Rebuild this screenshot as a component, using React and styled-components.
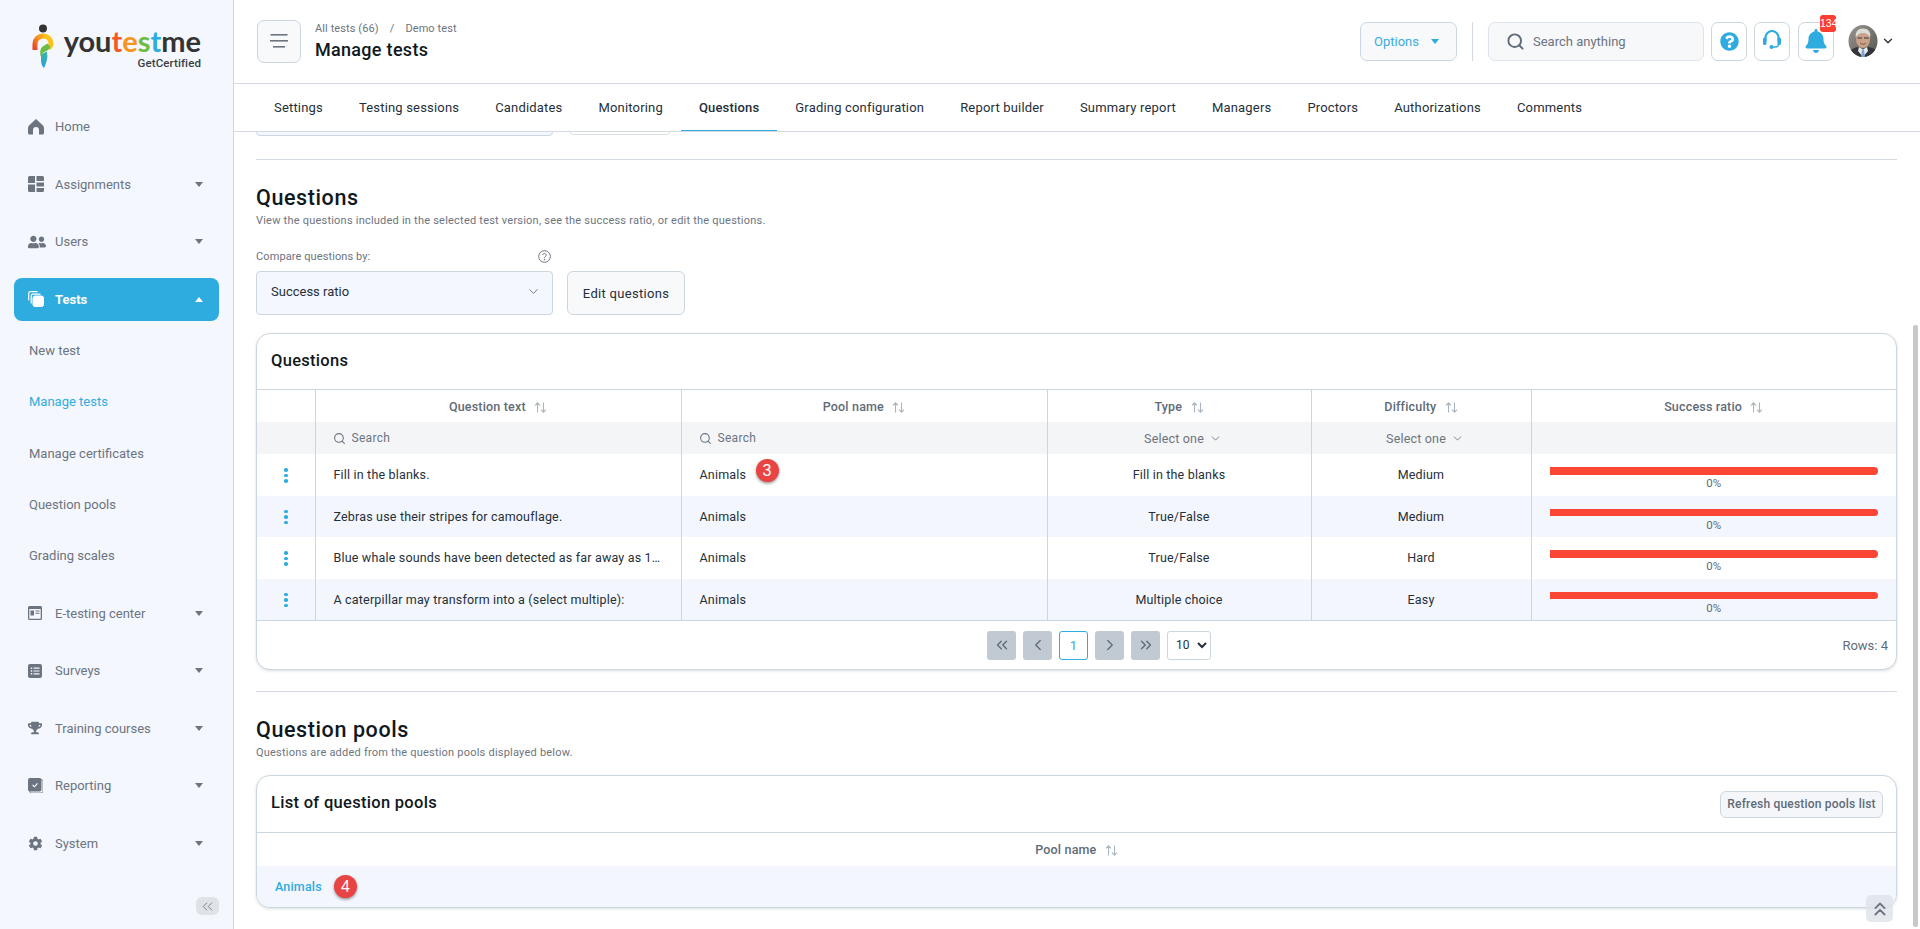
import React from "react";
import styled, { createGlobalStyle } from "styled-components";
import { FaBell, FaQuestionCircle, FaTrophy, FaUserFriends } from "react-icons/fa";
import { IoSettingsSharp } from "react-icons/io5";
import {
  LuChevronDown, LuChevronLeft, LuChevronRight, LuChevronsLeft, LuChevronsRight, LuChevronsUp, LuSearch,
} from "react-icons/lu";

const Global = createGlobalStyle`
  html, body { margin: 0; padding: 0; height: 100%; overflow: hidden; background: #fff; }
  body { font-family: Roboto, "Liberation Sans", sans-serif; letter-spacing: .3px; color: #1f2933; }
  * { box-sizing: border-box; }
`;

const Shell = styled.div`display: flex; width: 1920px; height: 929px; position: relative; overflow: hidden;`;

/* ---------- sidebar ---------- */
const Sidebar = styled.aside`
  width: 234px; flex: none; height: 100%; background: #f4f7fe; border-right: 1px solid #ced6de;
  padding: 0 14px; display: flex; flex-direction: column; position: relative;
`;
const LogoBox = styled.div`height: 105px; display: flex; padding: 24px 0 0 18px; gap: 9px; flex: none;`;
const LogoWords = styled.div`display: flex; flex-direction: column; align-items: flex-end; width: 138px; margin-top: 4px;`;
const LogoName = styled.div`
  font-family: Lato, sans-serif; font-weight: 700; font-size: 29px; line-height: 26px; letter-spacing: 0; color: #333; white-space: nowrap;
`;
const LogoPart = styled.span`color: ${p => p.$c};`;
const LogoSub = styled.div`font-size: 11.5px; font-weight: 500; line-height: 13px; letter-spacing: .1px; color: #3a3f44; margin-top: 3px;`;

const NavItem = styled.div`
  height: 43px; flex: none; margin-bottom: ${p => (p.$open ? 0 : "14.5px")};
  display: flex; align-items: center; padding: 0 16px 0 14px; border-radius: 8px;
  background: ${p => (p.$active ? "#2eace0" : "transparent")};
  color: ${p => (p.$active ? "#fff" : "#6c7480")};
  font-size: 13px; letter-spacing: 0; font-weight: ${p => (p.$active ? 700 : 400)};
`;
const NavIcon = styled.span`width: 27px; flex: none; display: flex; align-items: center; font-size: 17px;`;
const NavLabel = styled.span`flex: 1;`;
const Caret = styled.span`
  width: 0; height: 0; border-left: 4.5px solid transparent; border-right: 4.5px solid transparent;
  ${p => (p.$up ? `border-bottom: 5px solid ${p.$c};` : `border-top: 5px solid ${p.$c};`)}
`;
const SubMenu = styled.div`padding: 4.5px 0 10.5px; flex: none;`;
const SubItem = styled.div`
  height: 51.3px; display: flex; align-items: center; padding-left: 15px; font-size: 13px; letter-spacing: 0;
  color: ${p => (p.$active ? "#2eace0" : "#6c7480")};
`;
const Collapse = styled.button`
  position: absolute; right: 14px; top: 897px; width: 23px; height: 18px; border: 0; border-radius: 6px;
  background: #dfe3e8; color: #6c7480; display: flex; align-items: center; justify-content: center; padding: 0;
`;

/* ---------- top ---------- */
const Main = styled.main`flex: 1; min-width: 0; display: flex; flex-direction: column; height: 100%;`;
const Header = styled.header`
  height: 84px; flex: none; display: flex; align-items: center; padding: 0 25px 1px 23px; border-bottom: 1px solid #d3dae1; background: #fff;
`;
const MenuButton = styled.button`
  width: 44px; height: 43px; flex: none; border: 1px solid #ccd6e0; border-radius: 7px; background: #f8f9fb;
  display: flex; align-items: center; justify-content: center; padding: 0;
`;
const TitleBlock = styled.div`margin-left: 14px; display: flex; flex-direction: column;`;
const Crumbs = styled.div`font-size: 11px; letter-spacing: .1px; line-height: 14px; color: #6c7480; display: flex; gap: 11px;`;
const PageTitle = styled.h1`margin: 3px 0 0; font-size: 18px; line-height: 22px; font-weight: 500; color: #101820;`;
const RightTools = styled.div`margin-left: auto; display: flex; align-items: center; height: 40px;`;
const OptionsButton = styled.button`
  width: 97px; height: 39px; border: 1px solid #ccd6e0; border-radius: 7px; background: #f8f9fb; color: #3cace0;
  font: 400 13px Roboto, sans-serif; letter-spacing: 0; display: flex; align-items: center; justify-content: center; gap: 12px; padding: 0 4px 0 0;
`;
const VSep = styled.span`width: 1px; height: 39px; background: #d3dae1; margin: 0 15px;`;
const GlobalSearch = styled.div`
  width: 216px; height: 39px; border: 1px solid #dde3ea; border-radius: 7px; background: #f7f8fa; letter-spacing: 0;
  display: flex; align-items: center; padding-left: 17px; gap: 8px; color: #6c7480; font-size: 13px;
`;
const ToolButton = styled.button`
  width: 36px; height: 39px; margin-left: ${p => p.$gap || 7}px; border: 1px solid #ccd6e0; border-radius: 7px; background: #fff; color: #2eace0;
  display: flex; align-items: center; justify-content: center; padding: 0; position: relative;
`;
const CountBadge = styled.span`
  position: absolute; top: -8px; right: -3px; width: 16px; height: 17px; background: #fb3f31; border-radius: 3px;
  color: #fff; font-size: 10.5px; font-weight: 500; letter-spacing: 0; line-height: 17px; text-align: center;
`;
const AvatarWrap = styled.div`margin-left: 14px; display: flex; align-items: center; gap: 3px; color: #333;`;

const TabBar = styled.nav`height: 48px; flex: none; display: flex; padding-left: 22px; border-bottom: 1px solid #d3dae1; background: #fff; position: relative; z-index: 2;`;
const Tab = styled.div`
  padding: 0 18px; height: 47px; display: flex; align-items: center; font-size: 13px; letter-spacing: .18px; color: #252f3a; white-space: nowrap;
  font-weight: ${p => (p.$active ? 500 : 400)};
  border-bottom: ${p => (p.$active ? "1px solid #2eace0" : "0")};
  margin-bottom: -1px;
`;

/* ---------- content ---------- */
const Content = styled.div`flex: 1; overflow: hidden; padding: 0 23px 0 22px; background: #fff;`;
const ClippedRow = styled.div`display: flex; gap: 15px; margin-top: -40px; height: 44px;`;
const ClippedSelect = styled.div`width: 297px; height: 44px; background: #f4f7fe; border: 1px solid #ccd6e0; border-radius: 4px;`;
const ClippedButton = styled.div`width: 104px; height: 43px; background: #fff; border: 1px solid #d8dfe6; border-radius: 6px;`;
const Divider = styled.hr`margin: ${p => p.$top}px 0 0; border: 0; border-top: 1px solid #d3dae1;`;
const SectionTitle = styled.h2`margin: ${p => p.$top}px 0 0; font-size: 21.5px; line-height: 26px; font-weight: 500; color: #101820; letter-spacing: .6px;`;
const SectionText = styled.p`margin: 3px 0 0; font-size: 11px; line-height: 14px; color: #6c7480; letter-spacing: .22px;`;
const FieldLabelRow = styled.div`display: flex; justify-content: space-between; align-items: center; width: 297px; margin-top: 21px; height: 14px; padding-right: 2px; color: #6c7480; font-size: 11px; letter-spacing: .1px;`;
const ControlRow = styled.div`display: flex; gap: 14px; margin-top: 8px;`;
const SelectBox = styled.div`
  width: 297px; height: 44px; border: 1px solid #ccd6e0; border-radius: 4px; background: #f4f7fe; letter-spacing: 0;
  display: flex; align-items: center; justify-content: space-between; padding: 0 11px 3px 14px; font-size: 13px; color: #252f3a;
`;
const PlainButton = styled.button`
  width: 118px; height: 44px; border: 1px solid #ccd6e0; border-radius: 6px; background: #f8f9fb; color: #252f3a;
  font: 400 13px Roboto, sans-serif; letter-spacing: .3px; padding: 0;
`;
const Card = styled.section`
  margin-top: ${p => p.$top}px; border: 1px solid #ccd6e0; border-radius: 14px; background: #fff; overflow: hidden;
  box-shadow: 0 1px 3px rgba(40, 50, 60, .16);
`;
const CardHead = styled.div`
  height: ${p => p.$h}px; display: flex; align-items: center; justify-content: space-between; padding: 0 13px 2px 14px;
  border-bottom: 1px solid #ccd6e0;
`;
const CardTitle = styled.h3`margin: 0; font-size: 16.5px; line-height: 20px; font-weight: 500; color: #101820;`;
const SmallButton = styled.button`
  width: 163px; height: 27px; border: 1px solid #ccd6e0; border-radius: 6px; background: #f4f6f9; color: #5f6b78;
  font: 500 12px Roboto, sans-serif; letter-spacing: .2px; padding: 0; margin-top: 2px;
`;
const Table = styled.table`width: 100%; table-layout: fixed; border-collapse: collapse; font-size: 12.5px; letter-spacing: .18px;`;
const HeadCell = styled.th`
  height: ${p => p.$h || 32}px; padding: 0; font-weight: 500; color: #5f6b78; text-align: center;
  border-left: ${p => (p.$first ? "0" : "1px solid #ccd6e0")};
`;
const SortIcon = styled.svg`margin-left: 5px; vertical-align: -2px;`;
const FilterCell = styled.td`
  height: 32px; padding: 0 0 0 ${p => (p.$search ? 17 : 0)}px; background: #f4f5f7; color: #6c7480;
  text-align: ${p => (p.$search ? "left" : "center")};
  border-left: ${p => (p.$first ? "0" : "1px solid #ccd6e0")};
`;
const SearchField = styled.div`display: flex; align-items: center; gap: 6px;`;
const SearchInput = styled.input`
  border: 0; background: transparent; width: 120px; padding: 0; outline: 0; font: 400 12px Roboto, sans-serif; letter-spacing: .3px;
  color: #6c7480; &::placeholder { color: #6c7480; opacity: 1; }
`;
const DropFilter = styled.span`display: inline-flex; align-items: center; gap: 5px; margin-left: 8px;`;
const Row = styled.tr`background: ${p => (p.$alt ? "#f3f6fd" : "#fff")};`;
const Cell = styled.td`
  height: ${p => p.$h || 41.5}px; padding: 0 ${p => (p.$pad ? 18 : 0)}px; color: #252f3a; white-space: nowrap;
  text-align: ${p => (p.$pad ? "left" : "center")}; position: relative;
  border-left: ${p => (p.$first ? "0" : "1px solid #ccd6e0")};
`;
const Kebab = styled.span`display: inline-flex; flex-direction: column; gap: 2px; vertical-align: middle;`;
const Dot = styled.i`width: 3.6px; height: 3.6px; border-radius: 50%; background: #2eace0; display: block;`;
const RatioCell = styled.div`padding: 0 18px 0 18px; display: flex; flex-direction: column; align-items: stretch; margin-top: 8px;`;
const RatioBar = styled.div`height: 7.5px; background: #fb4535; border-radius: 0 4px 4px 0;`;
const RatioText = styled.div`font-size: 11.5px; line-height: 14px; color: #5f6b78; text-align: center; margin-top: 1.5px;`;
const Callout = styled.span`
  position: absolute; top: ${p => p.$top}px; left: ${p => p.$left}px; width: 23px; height: 23px; border-radius: 50%; background: #e94444; color: #fff;
  font: 400 16px/23px "Liberation Sans", Arial, sans-serif; letter-spacing: 0; text-align: center; box-shadow: 0 1.5px 3px rgba(0,0,0,.4);
`;
const Pager = styled.div`height: 49px; border-top: 1px solid #ccd6e0; display: flex; align-items: center; padding: 0 8px 0 730px; gap: 7px; position: relative;`;
const PageButton = styled.button`
  width: 29px; height: 29px; border-radius: 3px; padding: 0; display: flex; align-items: center; justify-content: center; font: 400 13px Roboto, sans-serif;
  background: ${p => (p.$current ? "#fff" : "#c1cad3")}; color: ${p => (p.$current ? "#2eace0" : "#5f6b78")};
  border: ${p => (p.$current ? "1px solid #2eace0" : "0")};
`;
const PageSize = styled.select`
  width: 44px; height: 29px; border: 1px solid #ccd6e0; border-radius: 3px; background: #fff; color: #252f3a; font: 400 12px Roboto, sans-serif; padding: 0 0 0 4px;
`;
const RowCount = styled.div`margin-left: auto; font-size: 13px; letter-spacing: 0; color: #5f6b78;`;
const PoolLink = styled.a`color: #2eace0; font-weight: 500; text-decoration: none;`;
const ScrollThumb = styled.div`position: absolute; right: 2px; top: 325px; width: 5px; height: 602px; border-radius: 2px; background: #c8c8c8;`;
const ScrollTop = styled.button`
  position: absolute; left: 1866px; top: 895px; width: 27px; height: 27px; border: 0; border-radius: 5px; background: #dfe3e8cc; color: #6c7480;
  display: flex; align-items: center; justify-content: center; padding: 0;
`;

/* ---------- drawings ---------- */
const LogoMark = () => (
  <svg width="22" height="44" viewBox="0 0 22 44" style={{ flex: "none" }}>
    <defs>
      <linearGradient id="lgA" x1="0" y1="1" x2="1" y2="0"><stop offset="0" stopColor="#e8432a" /><stop offset=".6" stopColor="#f7941d" /><stop offset="1" stopColor="#fbb017" /></linearGradient>
      <linearGradient id="lgB" x1="0" y1="0" x2="0" y2="1"><stop offset="0" stopColor="#3fb5a0" /><stop offset="1" stopColor="#2a9fe0" /></linearGradient>
    </defs>
    <circle cx="11" cy="4.500" r="4" fill="#333" />
    <path d="M3 26 V20 a8 8 0 0 1 8 -8 h1" fill="none" stroke="url(#lgA)" strokeWidth="5" />
    <path d="M11.500 12 a7.500 7.500 0 0 1 7.500 7 q0 3 -2.500 5" fill="none" stroke="#fbc31a" strokeWidth="5" />
    <path d="M17.500 23 q-1 2.500 -4 3.500 q-3 .8 -4.500 3.500 q-.5 -6.500 4 -8 l2 -1.500 z" fill="#6cbd45" stroke="#6cbd45" strokeWidth="1.500" />
    <path d="M9 30.500 q3 -2 6 -3 q1 5 -.5 10 q-1 3.500 -2.500 6.500 q-2.500 -2 -3 -7 z" fill="url(#lgB)" />
  </svg>
);
const HomeIcon = () => (
  <svg width="16" height="16" viewBox="0 0 16 16" fill="currentColor"><path d="M8 0 L15 6.500 Q16 7.500 16 9 V14 a1.500 1.500 0 0 1 -1.500 1.500 H11 V11 a3 3 0 0 0 -6 0 V15.500 H1.500 A1.500 1.500 0 0 1 0 14 V9 Q0 7.500 1 6.500 Z" /></svg>
);
const TilesIcon = () => (
  <svg width="16" height="16" viewBox="0 0 16 16" fill="currentColor"><path d="M1.500 0H7v7H0V1.500A1.500 1.500 0 0 1 1.500 0zM8.500 0h6A1.500 1.500 0 0 1 16 1.500V5H8.500zM0 8.500h7V16H1.500A1.500 1.500 0 0 1 0 14.500zM8.500 6.500H16v4H8.500zM8.500 12H16v2.500a1.500 1.500 0 0 1-1.500 1.500h-6z" /></svg>
);
const StackIcon = () => (
  <svg width="16" height="16" viewBox="0 0 16 16" fill="none" stroke="currentColor"><rect x="5" y="5" width="10.500" height="10.500" rx="2" fill="currentColor" /><path d="M3.200 12.500V4.700A1.500 1.500 0 0 1 4.700 3.200h7.800M.7 9.500V2.200A1.500 1.500 0 0 1 2.200 .7h7.300" strokeWidth="1.200" /></svg>
);
const PanelIcon = () => (
  <svg width="14" height="14" viewBox="0 0 14 14" fill="currentColor"><path fillRule="evenodd" d="M1.500 0h11A1.500 1.500 0 0 1 14 1.500v11a1.500 1.500 0 0 1-1.500 1.500h-11A1.500 1.500 0 0 1 0 12.500v-11A1.500 1.500 0 0 1 1.500 0zM1.300 3v9.700h11.400V3zM2.500 4.500h3.500v5H2.500zM7.500 4.500h4v1h-4zM7.500 6.800h4v1h-4z" /></svg>
);
const ListIcon = () => (
  <svg width="14" height="14" viewBox="0 0 14 14"><rect width="14" height="14" rx="2" fill="currentColor" /><path d="M2.800 3.500h1.400v1.400H2.800zM2.800 6.300h1.400v1.400H2.800zM2.800 9.100h1.400v1.400H2.800zM5.500 3.600h6v1.200h-6zM5.500 6.400h6v1.200h-6zM5.500 9.200h6v1.200h-6z" fill="#f4f7fe" /></svg>
);
const ReportIcon = () => (
  <svg width="15" height="15" viewBox="0 0 15 15"><rect x="1.500" y="1.500" width="13.500" height="13.500" rx="2" fill="none" stroke="currentColor" strokeWidth=".8" /><rect width="13.500" height="13.500" rx="2" fill="currentColor" /><path d="M4.500 6.800l2 2 3-3.500" fill="none" stroke="#fff" strokeWidth="1.100" /></svg>
);
const MenuLines = () => (
  <svg width="18" height="14" viewBox="0 0 18 14" fill="#6c7480"><rect y="0" x=".5" width="17" height="1.600" /><rect y="6" width="18" height="1.600" /><rect y="12" x="3" width="12" height="1.600" /></svg>
);
const HeadsetIcon = () => (
  <svg width="20" height="24" viewBox="0 0 20 24" fill="none" stroke="currentColor"><path d="M3.500 12V8.500a6.500 6.500 0 0 1 13 0V12" strokeWidth="2.200" /><path d="M16.500 12v3a3 3 0 0 1-3 3H11" strokeWidth="1.300" /><rect x="1" y="8.500" width="3.500" height="7.500" rx="1.600" fill="currentColor" stroke="none" /><rect x="15.500" y="8.500" width="3.500" height="7.500" rx="1.600" fill="currentColor" stroke="none" /><circle cx="9.500" cy="18" r="2" fill="currentColor" stroke="none" /></svg>
);
const Avatar = () => (
  <svg width="30" height="32" viewBox="0 0 30 32">
    <defs>
      <clipPath id="av"><ellipse cx="15" cy="16" rx="14.500" ry="16" /></clipPath>
      <linearGradient id="avBg" x1="0" y1="0" x2="1" y2="1"><stop offset="0" stopColor="#9a9790" /><stop offset="1" stopColor="#55544f" /></linearGradient>
    </defs>
    <g clipPath="url(#av)">
      <rect width="30" height="32" fill="url(#avBg)" />
      <path d="M0 32v-3q3-6 10-7l5 2 5-2q8 1 10 6v4z" fill="#34363b" />
      <path d="M11 22l4 2.500 4-2.500 1 4-5 6-5-6z" fill="#e6ecf2" />
      <path d="M14 24.500h2l1 7.500h-4z" fill="#7fa6cf" />
      <ellipse cx="15" cy="14.500" rx="7" ry="8.500" fill="#c9a088" />
      <path d="M7.800 13q-1.300-9.500 7.200-9.500t7.200 9.500q-2-5-7.200-5t-7.200 5z" fill="#dddcd6" />
      <path d="M9.500 13h4.500M16 13h4.500" stroke="#3b3230" strokeWidth="1.200" />
      <path d="M12 18.500q3 1.500 6 0" stroke="#7d4f41" strokeWidth=".8" fill="none" />
    </g>
  </svg>
);
const Sort = () => (
  <SortIcon width="13" height="11" viewBox="0 0 13 11" fill="none" stroke="#aab4bf" strokeWidth="1.100"><path d="M3.500 10.500V1M1 3.300L3.500 .8 6 3.300M9.500 .5V10M7 7.700l2.500 2.500L12 7.700" /></SortIcon>
);
const InfoIcon = () => (
  <svg width="13" height="13" viewBox="0 0 13 13" fill="none" stroke="#6c7480"><circle cx="6.500" cy="6.500" r="5.800" /><path d="M4.800 5a1.700 1.700 0 1 1 2.500 1.600c-.6.300-.8.600-.8 1.200" /><circle cx="6.500" cy="9.600" r=".4" fill="#6c7480" /></svg>
);

const MENU_TOP = [
  ["Home", <HomeIcon />, false],
  ["Assignments", <TilesIcon />, true],
  ["Users", <FaUserFriends size={18} />, true],
];
const SUBMENU = ["New test", "Manage tests", "Manage certificates", "Question pools", "Grading scales"];
const MENU_BOTTOM = [
  ["E-testing center", <PanelIcon />],
  ["Surveys", <ListIcon />],
  ["Training courses", <FaTrophy size={14} />],
  ["Reporting", <ReportIcon />],
  ["System", <IoSettingsSharp size={15} />],
];
const TABS = ["Settings", "Testing sessions", "Candidates", "Monitoring", "Questions", "Grading configuration", "Report builder", "Summary report", "Managers", "Proctors", "Authorizations", "Comments"];
const ROWS = [
  ["Fill in the blanks.", "Fill in the blanks", "Medium"],
  ["Zebras use their stripes for camouflage.", "True/False", "Medium"],
  ["Blue whale sounds have been detected as far away as 1…", "True/False", "Hard"],
  ["A caterpillar may transform into a (select multiple):", "Multiple choice", "Easy"],
];
const COLS = [58, 366, 366, 264, 220, 365];

export default function App() {
  return (
    <Shell>
      <Global />
      <Sidebar>
        <LogoBox>
          <LogoMark />
          <LogoWords>
            <LogoName>
              you<LogoPart $c="#f15a29">t</LogoPart><LogoPart $c="#f7941d">e</LogoPart><LogoPart $c="#6cbd45">s</LogoPart><LogoPart $c="#2eace0">t</LogoPart>me
            </LogoName>
            <LogoSub>GetCertified</LogoSub>
          </LogoWords>
        </LogoBox>
        {MENU_TOP.map(([label, icon, caret]) => (
          <NavItem key={label}>
            <NavIcon>{icon}</NavIcon>
            <NavLabel>{label}</NavLabel>
            {caret && <Caret $c="#6c7480" />}
          </NavItem>
        ))}
        <NavItem $active $open>
          <NavIcon><StackIcon /></NavIcon>
          <NavLabel>Tests</NavLabel>
          <Caret $up $c="#fff" />
        </NavItem>
        <SubMenu>
          {SUBMENU.map(s => <SubItem key={s} $active={s === "Manage tests"}>{s}</SubItem>)}
        </SubMenu>
        {MENU_BOTTOM.map(([label, icon]) => (
          <NavItem key={label}>
            <NavIcon>{icon}</NavIcon>
            <NavLabel>{label}</NavLabel>
            <Caret $c="#6c7480" />
          </NavItem>
        ))}
        <Collapse aria-label="Collapse"><LuChevronsLeft size={17} strokeWidth={1.2} /></Collapse>
      </Sidebar>

      <Main>
        <Header>
          <MenuButton aria-label="Menu"><MenuLines /></MenuButton>
          <TitleBlock>
            <Crumbs><span>All tests (66)</span><span>/</span><span>Demo test</span></Crumbs>
            <PageTitle>Manage tests</PageTitle>
          </TitleBlock>
          <RightTools>
            <OptionsButton>Options <Caret $c="#2eace0" /></OptionsButton>
            <VSep />
            <GlobalSearch><LuSearch size={19} color="#5f6b78" strokeWidth={2.4} /> Search anything</GlobalSearch>
            <ToolButton aria-label="Help"><FaQuestionCircle size={19} /></ToolButton>
            <ToolButton aria-label="Support"><HeadsetIcon /></ToolButton>
            <ToolButton aria-label="Notifications" $gap={8}><FaBell size={24} /><CountBadge>134</CountBadge></ToolButton>
            <AvatarWrap><Avatar /><LuChevronDown size={14} strokeWidth={2.4} /></AvatarWrap>
          </RightTools>
        </Header>
        <TabBar>
          {TABS.map(t => <Tab key={t} $active={t === "Questions"}>{t}</Tab>)}
        </TabBar>
        <Content>
          <ClippedRow><ClippedSelect /><ClippedButton /></ClippedRow>
          <Divider $top={23} />
          <SectionTitle $top={25}>Questions</SectionTitle>
          <SectionText>View the questions included in the selected test version, see the success ratio, or edit the questions.</SectionText>
          <FieldLabelRow><span>Compare questions by:</span><InfoIcon /></FieldLabelRow>
          <ControlRow>
            <SelectBox>Success ratio <LuChevronDown size={15} color="#6c7480" strokeWidth={1.5} /></SelectBox>
            <PlainButton>Edit questions</PlainButton>
          </ControlRow>
          <Card $top={18}>
            <CardHead $h={56}><CardTitle>Questions</CardTitle></CardHead>
            <Table>
              <colgroup>{COLS.map((w, i) => <col key={i} style={{ width: w }} />)}</colgroup>
              <thead>
                <tr>
                  <HeadCell $first />
                  <HeadCell>Question text <Sort /></HeadCell>
                  <HeadCell>Pool name <Sort /></HeadCell>
                  <HeadCell>Type <Sort /></HeadCell>
                  <HeadCell>Difficulty <Sort /></HeadCell>
                  <HeadCell>Success ratio <Sort /></HeadCell>
                </tr>
                <tr>
                  <FilterCell $first />
                  <FilterCell $search><SearchField><LuSearch size={13} /><SearchInput placeholder="Search" /></SearchField></FilterCell>
                  <FilterCell $search><SearchField><LuSearch size={13} /><SearchInput placeholder="Search" /></SearchField></FilterCell>
                  <FilterCell><DropFilter>Select one <LuChevronDown size={13} strokeWidth={1.6} /></DropFilter></FilterCell>
                  <FilterCell><DropFilter>Select one <LuChevronDown size={13} strokeWidth={1.6} /></DropFilter></FilterCell>
                  <FilterCell />
                </tr>
              </thead>
              <tbody>
                {ROWS.map(([q, type, diff], i) => (
                  <Row key={q} $alt={i % 2 === 1}>
                    <Cell $first><Kebab><Dot /><Dot /><Dot /></Kebab></Cell>
                    <Cell $pad>{q}</Cell>
                    <Cell $pad>Animals{i === 0 && <Callout $top={5} $left={74}>3</Callout>}</Cell>
                    <Cell>{type}</Cell>
                    <Cell>{diff}</Cell>
                    <Cell><RatioCell><RatioBar /><RatioText>0%</RatioText></RatioCell></Cell>
                  </Row>
                ))}
              </tbody>
            </Table>
            <Pager>
              <PageButton aria-label="First"><LuChevronsLeft size={18} strokeWidth={1.8} /></PageButton>
              <PageButton aria-label="Previous"><LuChevronLeft size={18} strokeWidth={1.8} /></PageButton>
              <PageButton $current>1</PageButton>
              <PageButton aria-label="Next"><LuChevronRight size={18} strokeWidth={1.8} /></PageButton>
              <PageButton aria-label="Last"><LuChevronsRight size={18} strokeWidth={1.8} /></PageButton>
              <PageSize defaultValue="10"><option>10</option><option>25</option><option>50</option></PageSize>
              <RowCount>Rows: 4</RowCount>
            </Pager>
          </Card>
          <Divider $top={21} />
          <SectionTitle $top={25}>Question pools</SectionTitle>
          <SectionText>Questions are added from the question pools displayed below.</SectionText>
          <Card $top={15}>
            <CardHead $h={57}><CardTitle>List of question pools</CardTitle><SmallButton>Refresh question pools list</SmallButton></CardHead>
            <Table>
              <thead><tr><HeadCell $first $h={33}>Pool name <Sort /></HeadCell></tr></thead>
              <tbody>
                <Row $alt><Cell $pad $first $h={41}><PoolLink>Animals</PoolLink><Callout $top={9} $left={77}>4</Callout></Cell></Row>
              </tbody>
            </Table>
          </Card>
        </Content>
      </Main>
      <ScrollThumb />
      <ScrollTop aria-label="Scroll to top"><LuChevronsUp size={22} strokeWidth={2} /></ScrollTop>
    </Shell>
  );
}
